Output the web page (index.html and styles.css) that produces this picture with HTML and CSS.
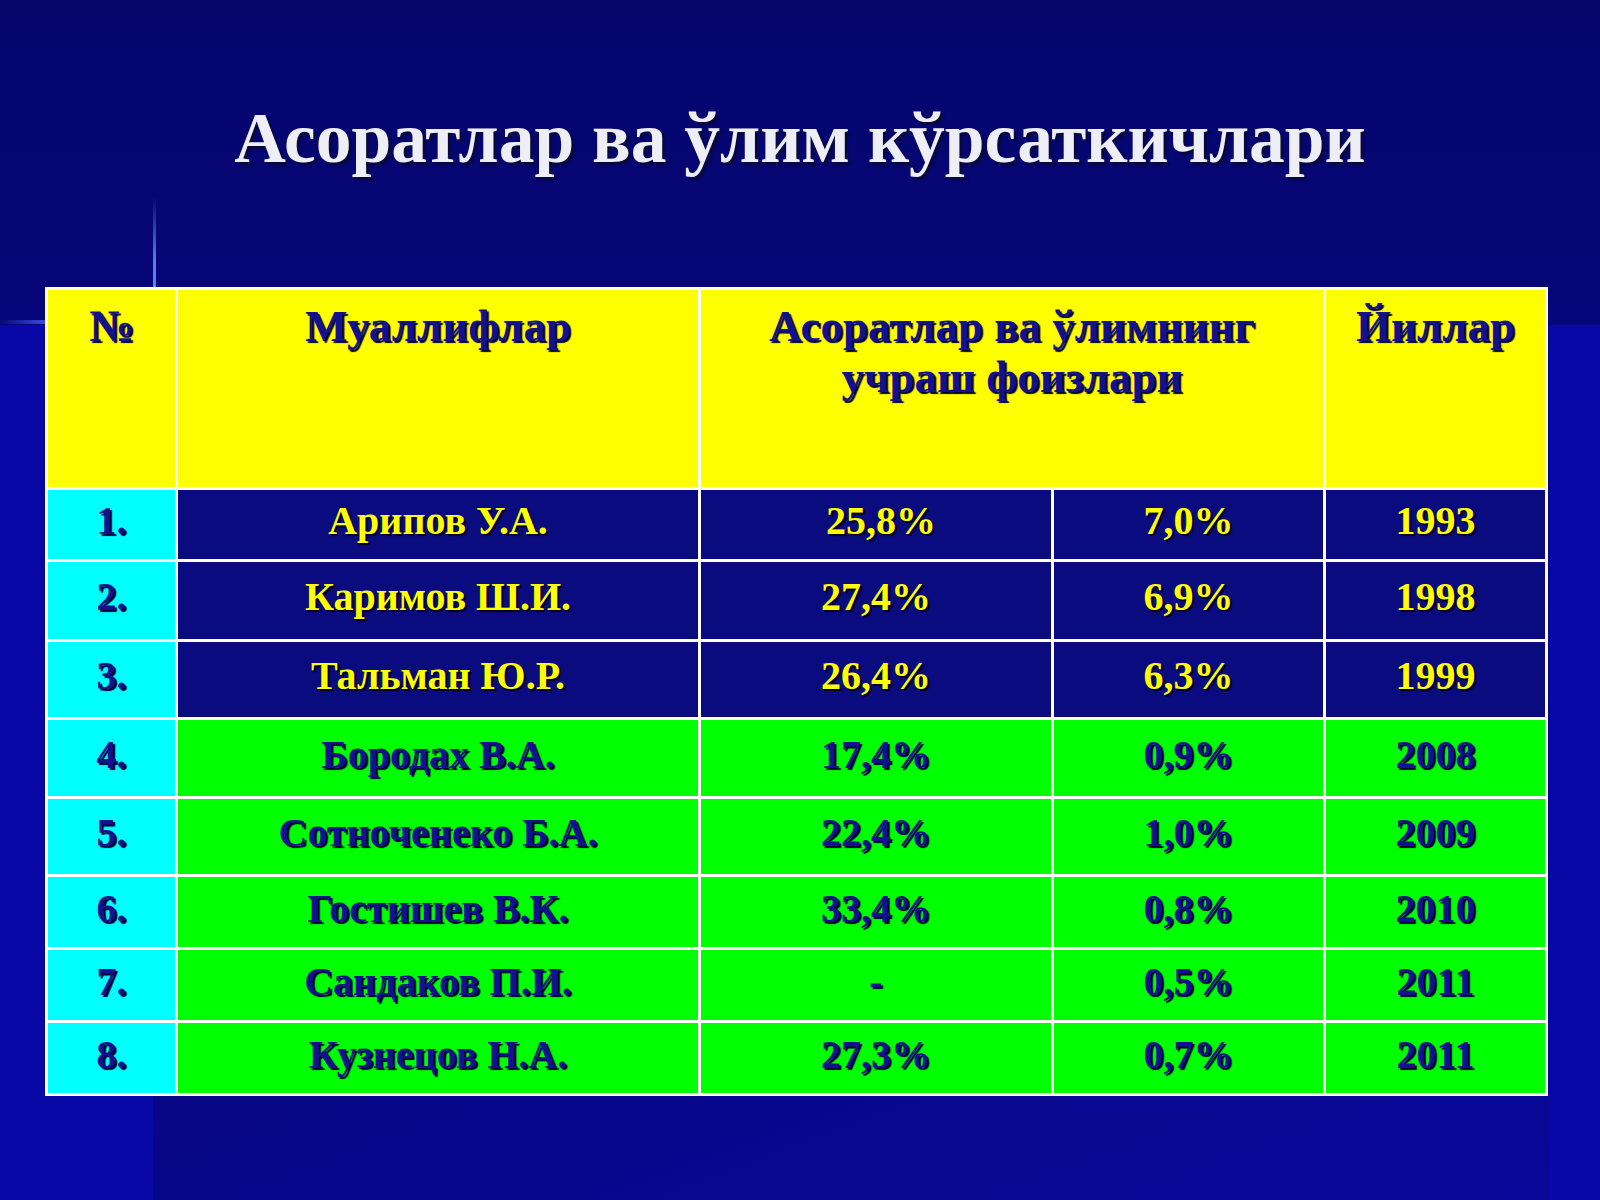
FILE: index.html
```html
<!DOCTYPE html>
<html lang="uz">
<head>
<meta charset="utf-8">
<title>Асоратлар ва ўлим кўрсаткичлари</title>
<link rel="stylesheet" href="styles.css">
</head>
<body>
<div class="slide">
  <h1 class="title">Асоратлар ва ўлим кўрсаткичлари</h1>
  <table class="grid">
    <colgroup>
      <col class="c-num"><col class="c-name"><col class="c-p1"><col class="c-p2"><col class="c-year">
    </colgroup>
    <thead>
      <tr class="h-head">
        <th>№</th>
        <th>Муаллифлар</th>
        <th colspan="2">Асоратлар ва ўлимнинг<br>учраш фоизлари</th>
        <th>Йиллар</th>
      </tr>
    </thead>
    <tbody>
      <tr class="blue h72"><td class="num">1.</td><td>Арипов У.А.</td><td>&nbsp;25,8%</td><td>7,0%</td><td>1993</td></tr>
      <tr class="blue h80"><td class="num">2.</td><td>Каримов Ш.И.</td><td>27,4%</td><td>6,9%</td><td>1998</td></tr>
      <tr class="blue h78"><td class="num">3.</td><td>Тальман Ю.Р.</td><td>26,4%</td><td>6,3%</td><td>1999</td></tr>
      <tr class="green h79"><td class="num">4.</td><td>Бородах В.А.</td><td>17,4%</td><td>0,9%</td><td>2008</td></tr>
      <tr class="green h78"><td class="num">5.</td><td>Сотноченеко Б.А.</td><td>22,4%</td><td>1,0%</td><td>2009</td></tr>
      <tr class="green h73"><td class="num">6.</td><td>Гостишев В.К.</td><td>33,4%</td><td>0,8%</td><td>2010</td></tr>
      <tr class="green h73"><td class="num">7.</td><td>Сандаков П.И.</td><td>-</td><td>0,5%</td><td>2011</td></tr>
      <tr class="green h73"><td class="num">8.</td><td>Кузнецов Н.А.</td><td>27,3%</td><td>0,7%</td><td>2011</td></tr>
    </tbody>
  </table>
</div>
</body>
</html>
```

FILE: styles.css
```css
html, body {
  margin: 0;
  padding: 0;
  background: #0808a6;
}

.slide {
  width: 1600px;
  height: 1200px;
  box-sizing: border-box;
  padding: 102px 0 0 45px;
  overflow: hidden;
  font-family: "Liberation Serif", "Times New Roman", serif;
  background-color: #0808a6;
  background-image:
    linear-gradient(180deg, rgba(90,120,255,0) 0%, rgba(110,140,255,0.85) 70%, rgba(110,140,255,0.9) 100%),
    linear-gradient(90deg, rgba(60,80,255,0) 0%, rgba(70,90,255,0.8) 100%),
    linear-gradient(180deg, #05056c 0%, #06067a 100%),
    linear-gradient(160deg, #06066e 0%, #070788 60%, #08089a 100%);
  background-size:
    3px 90px,
    45px 4px,
    100% 325px,
    1397px 875px;
  background-position:
    153px 197px,
    0 320px,
    0 0,
    153px 325px;
  background-repeat: no-repeat;
}

.title {
  margin: 0 0 0 -45px;
  width: 1600px;
  text-align: center;
  font-size: 71.5px;
  line-height: 72px;
  font-weight: bold;
  color: #eeeef6;
  text-shadow: 3px 3px 2px rgba(10, 10, 40, 0.7);
}

.grid {
  margin-top: 113px;
  width: 1500px;
  table-layout: fixed;
  border-collapse: collapse;
  border: 3px solid #ffffff;
}

.c-num { width: 130px; }
.c-name { width: 523px; }
.c-p1 { width: 353px; }
.c-p2 { width: 272px; }
.c-year { width: 222px; }

.grid th,
.grid td {
  border: 3px solid #ffffff;
  padding: 0;
  text-align: center;
  font-weight: bold;
}

.grid th {
  background: #ffff00;
  color: #12128e;
  font-size: 45px;
  line-height: 51px;
  vertical-align: top;
  padding-top: 11px;
  text-shadow: 2px 2px 1px #000033;
}

.h-head { height: 200px; }
.h72 { height: 72px; }
.h73 { height: 73px; }
.h78 { height: 78px; }
.h79 { height: 79px; }
.h80 { height: 80px; }

.grid td {
  font-size: 40px;
  line-height: 46px;
  vertical-align: middle;
  padding-bottom: 7px;
}

.blue td {
  background: #0b0b80;
  color: #ffff00;
  text-shadow: 2px 2px 1px #000010;
}

.green td {
  background: #00ff00;
  color: #12128e;
  text-shadow: 2px 2px 1px #000030;
}

.grid td.num {
  background: #00ffff;
  color: #12128e;
  text-shadow: 2px 2px 1px #000030;
}
```
